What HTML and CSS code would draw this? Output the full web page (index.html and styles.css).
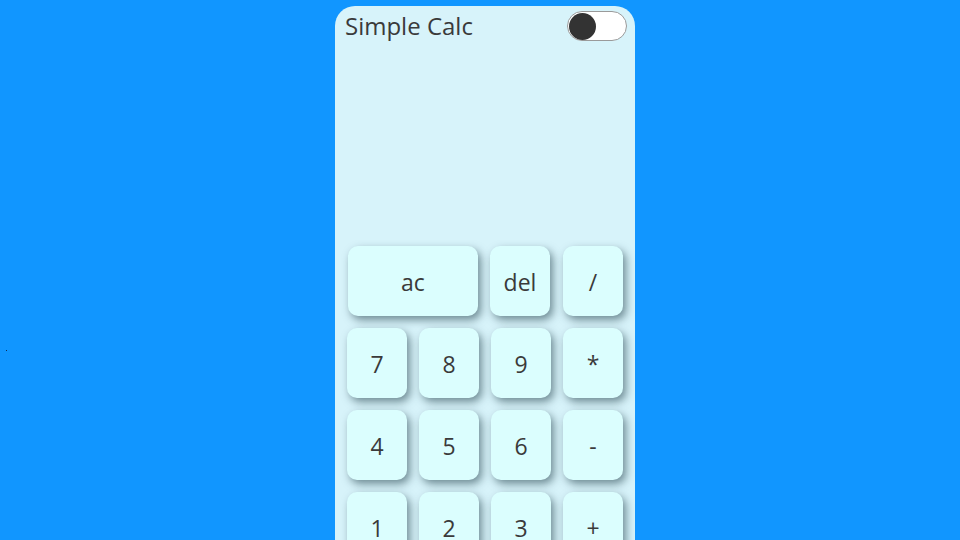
FILE: index.html
```html
<!DOCTYPE html>
<html lang="en">
<head>
<meta charset="utf-8">
<title>Simple Calc</title>
<link rel="stylesheet" href="styles.css">
</head>
<body>
<span class="dot"></span>
<main class="calc">
  <header class="calc-head">
    <h1 class="title">Simple Calc</h1>
    <label class="toggle"><span class="knob"></span></label>
  </header>
  <div class="display"></div>
  <div class="keys">
    <button class="key key-ac">ac</button>
    <button class="key key-del">del</button>
    <button class="key">/</button>
    <button class="key">7</button>
    <button class="key">8</button>
    <button class="key">9</button>
    <button class="key">*</button>
    <button class="key">4</button>
    <button class="key">5</button>
    <button class="key">6</button>
    <button class="key">-</button>
    <button class="key">1</button>
    <button class="key">2</button>
    <button class="key">3</button>
    <button class="key">+</button>
  </div>
</main>
</body>
</html>
```
FILE: styles.css
```css
html, body {
  margin: 0;
  padding: 0;
}
body {
  background: #1196ff;
  font-family: "Open Sans", "Noto Sans", sans-serif;
  color: #3a3a3a;
  height: 540px;
  overflow: hidden;
  display: flex;
  justify-content: center;
  padding: 6px 0 0 10px;
  box-sizing: border-box;
}
.dot {
  position: absolute;
  left: 6px;
  top: 350px;
  width: 1px;
  height: 1px;
  background: #0b2a55;
}
.calc {
  width: 300px;
  background: #d7f3fa;
  border-radius: 20px 20px 0 0;
  min-height: 700px;
  box-sizing: border-box;
}
.calc-head {
  display: flex;
  justify-content: space-between;
  align-items: flex-start;
  padding: 4px 8px 0 10px;
}
.title {
  margin: 0;
  font-weight: 400;
  font-size: 24px;
  line-height: 32px;
  letter-spacing: 0;
}
.toggle {
  box-sizing: border-box;
  width: 60px;
  height: 30px;
  margin-top: 1px;
  border: 1px solid #9a9a9a;
  border-radius: 15px;
  background: #fff;
  display: flex;
  align-items: center;
  padding: 0 1px;
}
.knob {
  width: 27px;
  height: 27px;
  border-radius: 50%;
  background: #333;
}
.display {
  height: 204px;
}
.keys {
  display: grid;
  grid-template-columns: repeat(4, 60px);
  grid-auto-rows: 70px;
  gap: 12px;
  padding: 0 12px;
}
.key {
  border: none;
  border-radius: 10px;
  background: #dbfefe;
  box-shadow: 3px 4px 8px rgba(40, 70, 80, 0.6);
  font-family: "Open Sans", "Noto Sans", sans-serif;
  font-size: 23px;
  color: #3a3a3a;
  padding: 2px 0 0;
}
.key-ac {
  grid-column: span 2;
  margin: 0 1px;
}
.key-del {
  margin: 0 1px 0 -1px;
}
```
